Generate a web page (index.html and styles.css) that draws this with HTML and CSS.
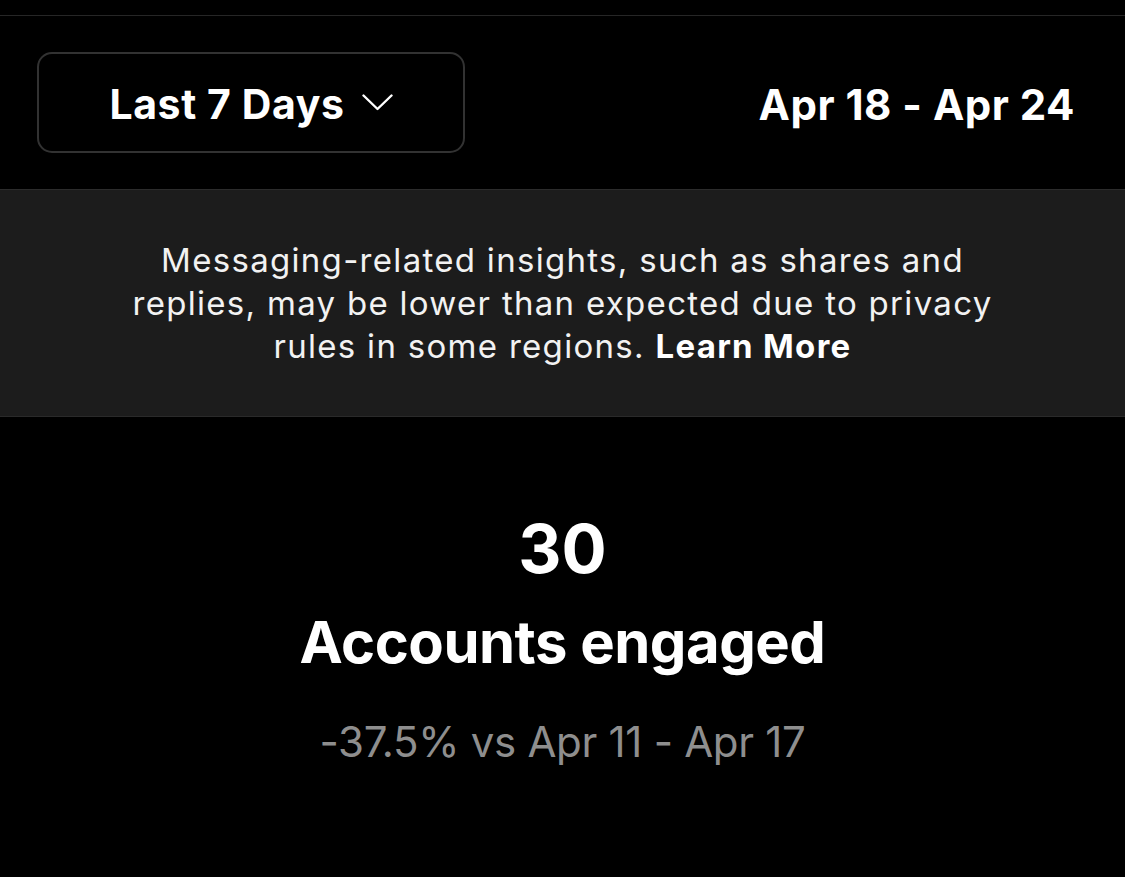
FILE: index.html
```html
<!DOCTYPE html>
<html lang="en">

<head>
  <meta charset="UTF-8" />
  <meta name="viewport" content="width=device-width, initial-scale=1.0" />
  <title>Insights</title>
  <link rel="stylesheet" href="styles.css">
</head>

<body>
  <div class="top-bar"></div>

  <header class="range-row">
    <button class="range-select">
      <span>Last 7 Days</span>
      <svg class="chevron" width="31" height="17" viewBox="0 0 31 17">
        <polyline points="1.5,1.5 15.5,15 29.5,1.5" fill="none" stroke="#fff" stroke-width="2.4" stroke-linecap="round" stroke-linejoin="round" />
      </svg>
    </button>
    <div class="range-dates">Apr 18 - Apr 24</div>
  </header>

  <div class="notice">
    <p>Messaging-related insights, such as shares and<br>
      replies, may be lower than expected due to privacy<br>
      rules in some regions. <b>Learn More</b></p>
  </div>

  <section class="stat">
    <div class="stat-value">30</div>
    <div class="stat-label">Accounts engaged</div>
    <div class="stat-compare">-37.5% vs Apr 11 - Apr 17</div>
  </section>
</body>

</html>
```

FILE: styles.css
```css
* {
  margin: 0;
  padding: 0;
  box-sizing: border-box;
  font-family: Inter, 'Noto Sans', sans-serif;
}

body {
  background: #000;
  color: #fff;
  width: 1125px;
  height: 877px;
  overflow: hidden;
}

.top-bar {
  height: 16px;
  border-bottom: 1px solid #262626;
}

.range-row {
  height: 174px;
  display: flex;
  align-items: center;
  justify-content: space-between;
  padding: 0 50px 0 37px;
  border-bottom: 1px solid #2c2c2c;
}

.range-select {
  width: 428px;
  height: 101px;
  background: #000;
  border: 2px solid #323232;
  border-radius: 15px;
  color: #fff;
  display: flex;
  align-items: center;
  justify-content: center;
  gap: 17px;
  font-size: 41px;
  font-weight: 700;
  letter-spacing: 0.6px;
}

.range-select span {
  margin-top: 2px;
}

.range-dates {
  font-size: 42px;
  font-weight: 700;
  letter-spacing: 0.5px;
  margin-top: 4px;
}

.notice {
  background: #1c1c1c;
  height: 227px;
  border-bottom: 1px solid #2a2a2a;
  display: flex;
  align-items: center;
  justify-content: center;
  text-align: center;
}

.notice p {
  font-size: 33px;
  line-height: 43px;
  color: #f2f2f2;
  letter-spacing: 1.3px;
}

.notice b {
  font-weight: 700;
  color: #fff;
}

.stat {
  display: flex;
  flex-direction: column;
  align-items: center;
  padding-top: 92px;
}

.stat-value {
  font-size: 67px;
  font-weight: 700;
  line-height: 80px;
}

.stat-label {
  font-size: 58px;
  font-weight: 700;
  line-height: 70px;
  margin-top: 18px;
  letter-spacing: -0.5px;
}

.stat-compare {
  font-size: 42px;
  line-height: 50px;
  color: #8e8e8e;
  margin-top: 40px;
  letter-spacing: -0.3px;
}
```
